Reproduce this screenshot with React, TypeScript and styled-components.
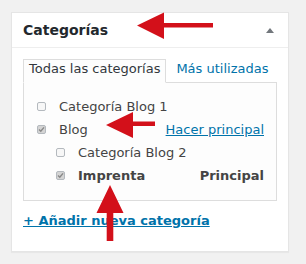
import React from "react";
import styled, { createGlobalStyle } from "styled-components";

const Global = createGlobalStyle`
  html, body { margin: 0; padding: 0; }
  body {
    background: #f1f1f1;
    font-family: "DejaVu Sans", "Liberation Sans", sans-serif;
    font-size: 13px;
    color: #444;
  }
`;

const Page = styled.div`
  position: relative;
  width: 306px;
  height: 264px;
  padding: 12px 0 0 11px;
  box-sizing: border-box;
`;

const Panel = styled.div`
  width: 278px;
  box-sizing: border-box;
  background: #fff;
  border: 1px solid #e5e5e5;
  box-shadow: 0 1px 1px rgba(0, 0, 0, 0.04);
`;

const Header = styled.div`
  display: flex;
  align-items: center;
  justify-content: space-between;
  height: 35px;
  box-sizing: border-box;
  padding: 0 14px 0 11px;
  border-bottom: 1px solid #eee;
`;

const Title = styled.h2`
  margin: 0;
  font-size: 14px;
  font-weight: bold;
  line-height: 34px;
  color: #23282d;
`;

const Toggle = styled.span`
  width: 0;
  height: 0;
  border-left: 4px solid transparent;
  border-right: 4px solid transparent;
  border-bottom: 5px solid #72777c;
  margin-top: 1px;
`;

const Body = styled.div`
  padding: 11px 11px 21px 11px;
`;

const Tabs = styled.div`
  display: flex;
  align-items: flex-start;
`;

const Tab = styled.div<{ $active?: boolean }>`
  line-height: 17px;
  padding: 0 5px 5px 5px;
  position: relative;
  z-index: 1;
  color: ${(p) => (p.$active ? "#32373c" : "#0073aa")};
  border: 1px solid ${(p) => (p.$active ? "#ddd" : "transparent")};
  border-bottom-color: ${(p) => (p.$active ? "#fdfdfd" : "transparent")};
  background: ${(p) => (p.$active ? "#fdfdfd" : "transparent")};
  margin-left: ${(p) => (p.$active ? "0" : "4px")};
`;

const ListBox = styled.div`
  margin-top: -1px;
  border: 1px solid #ddd;
  background: #fdfdfd;
  padding: 12px 12px 13px 13px;
`;

const Row = styled.div<{ $indent?: number }>`
  display: flex;
  align-items: center;
  height: 23px;
  padding-left: ${(p) => (p.$indent || 0) * 19}px;
  line-height: 23px;
  color: #444;
`;

const Box = styled.span<{ $checked?: boolean }>`
  display: inline-flex;
  align-items: center;
  justify-content: center;
  width: 9px;
  height: 9px;
  box-sizing: border-box;
  border: 1px solid #b4b9be;
  border-radius: 2px;
  background: ${(p) => (p.$checked ? "#d4d4d4" : "#f7f7f7")};
  margin-right: 13px;
  flex: none;
  margin-top: -1px;
`;

const Label = styled.span<{ $bold?: boolean }>`
  flex: 1;
  font-weight: ${(p) => (p.$bold ? "bold" : "normal")};
  white-space: nowrap;
`;

const Side = styled.span<{ $link?: boolean }>`
  color: ${(p) => (p.$link ? "#0073aa" : "#444")};
  text-decoration: ${(p) => (p.$link ? "underline" : "none")};
  font-weight: ${(p) => (p.$link ? "normal" : "bold")};
  white-space: nowrap;
`;

const AddLink = styled.a`
  display: block;
  margin-top: 10px;
  line-height: 19px;
  font-weight: bold;
  color: #0073aa;
  text-decoration: underline;
`;

const Overlay = styled.svg`
  position: absolute;
  left: 0;
  top: 0;
  pointer-events: none;
`;

const Check = () => (
  <svg width="7" height="7" viewBox="0 0 7 7">
    <path d="M1 3.6 L2.8 5.3 L6 1.4" fill="none" stroke="#888" strokeWidth="1.4" />
  </svg>
);

export default function App() {
  return (
    <>
      <Global />
      <Page>
        <Panel>
          <Header>
            <Title>Categorías</Title>
            <Toggle />
          </Header>
          <Body>
            <Tabs>
              <Tab $active>Todas las categorías</Tab>
              <Tab>Más utilizadas</Tab>
            </Tabs>
            <ListBox>
              <Row>
                <Box />
                <Label>Categoría Blog 1</Label>
              </Row>
              <Row>
                <Box $checked>
                  <Check />
                </Box>
                <Label>Blog</Label>
                <Side $link>Hacer principal</Side>
              </Row>
              <Row $indent={1}>
                <Box />
                <Label>Categoría Blog 2</Label>
              </Row>
              <Row $indent={1}>
                <Box $checked>
                  <Check />
                </Box>
                <Label $bold>Imprenta</Label>
                <Side>Principal</Side>
              </Row>
            </ListBox>
            <AddLink>+ Añadir nueva categoría</AddLink>
          </Body>
        </Panel>
        <Overlay width="306" height="264" viewBox="0 0 306 264">
          <polygon
            fill="#d3101a"
            points="137,25.5 164,12.5 164,23 213,23 213,27.5 164,27.5 164,39"
          />
          <polygon
            fill="#d3101a"
            points="106,125 133,112 133,121.5 155,121.5 155,126 133,126 133,138"
          />
          <polygon
            fill="#d3101a"
            points="110,185 123.5,213 113.3,213 113.3,241 106.7,241 106.7,213 96.5,213"
          />
        </Overlay>
      </Page>
    </>
  );
}
